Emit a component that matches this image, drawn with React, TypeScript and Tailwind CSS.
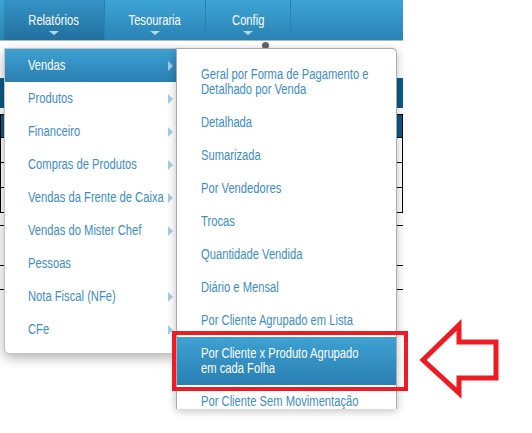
import { ReactNode } from "react";

const font = { fontFamily: '"Liberation Sans", Arial, sans-serif' };

const mainItems = [
  { label: "Vendas", arrow: true, active: true },
  { label: "Produtos", arrow: true },
  { label: "Financeiro", arrow: true },
  { label: "Compras de Produtos", arrow: true },
  { label: "Vendas da Frente de Caixa", arrow: true },
  { label: "Vendas do Mister Chef", arrow: true },
  { label: "Pessoas", arrow: false },
  { label: "Nota Fiscal (NFe)", arrow: true },
  { label: "CFe", arrow: true },
];

const subItems: { lines: string[]; active?: boolean }[] = [
  { lines: ["Geral por Forma de Pagamento e", "Detalhado por Venda"] },
  { lines: ["Detalhada"] },
  { lines: ["Sumarizada"] },
  { lines: ["Por Vendedores"] },
  { lines: ["Trocas"] },
  { lines: ["Quantidade Vendida"] },
  { lines: ["Diário e Mensal"] },
  { lines: ["Por Cliente Agrupado em Lista"] },
  { lines: ["Por Cliente x Produto Agrupado", "em cada Folha"], active: true },
  { lines: ["Por Cliente Sem Movimentação"] },
];

// narrow look of the original condensed face
function Narrow({ children, center }: { children: ReactNode; center?: boolean }) {
  return (
    <span className={`block whitespace-nowrap scale-x-[0.8] ${center ? "origin-center" : "origin-left"}`}>
      {children}
    </span>
  );
}

function Caret() {
  return <span className="block w-0 h-0 border-l-[5px] border-r-[5px] border-t-[4px] border-l-transparent border-r-transparent border-t-[#b3dcf3] mx-auto" />;
}

function NavItem({ label, active, width }: { label: string; active?: boolean; width: string }) {
  return (
    <div
      className={`${width} h-full flex flex-col items-center border-r border-[#2c7fae] ${
        active ? "bg-gradient-to-b from-[#3593c6] to-[#21709f]" : ""
      }`}
    >
      <span className="text-white text-[14px] leading-[16px] pt-[12px]">
        <Narrow center>{label}</Narrow>
      </span>
      <span className="pt-[3px]"><Caret /></span>
    </div>
  );
}

function SideArrow() {
  return <span className="w-0 h-0 border-t-[5px] border-b-[5px] border-l-[5px] border-t-transparent border-b-transparent border-l-[#a3cde8]" />;
}

export default function App() {
  return (
    <div className="relative w-[532px] h-[433px] overflow-hidden bg-white" style={font}>
      {/* top bar */}
      <div className="w-[403px] h-[40px] flex bg-gradient-to-b from-[#3ea3d5] to-[#2a83b5] pl-[4px]">
        <NavItem label="Relatórios" active width="w-[101px]" />
        <NavItem label="Tesouraria" width="w-[101px]" />
        <NavItem label="Config" width="w-[85px]" />
      </div>

      {/* page behind the menus */}
      <div className="w-[403px] border-t border-[#b5b5b5]">
        <div className="h-[37px]" />
        <div className="h-[30px] bg-[#0b5b8a]" />
        <div className="h-[6px]" />
        <div className="h-[24px] bg-[#0b5b8a] border border-black" />
        <div className="h-[25px] border-x border-b border-black" />
        <div className="h-[25px] border-x border-b border-black" />
        <div className="h-[25px] border-x border-b border-black" />
        <div className="h-[12px]" />
        <div className="h-[40px] border-t border-black" />
        <div className="h-[24px] border-t border-black" />
        <div className="h-[24px] border-t border-black" />
      </div>
      <span className="absolute left-[262px] top-[42px] w-[7px] h-[7px] rounded-full bg-[#666]" />

      {/* main dropdown */}
      <div className="absolute left-[4px] top-[48px] w-[173px] pb-[7px] bg-white border border-[#c4c4c4] rounded-b-[5px] shadow-[0_4px_12px_rgba(0,0,0,0.3)]">
        {mainItems.map((it) => (
          <div
            key={it.label}
            className={`h-[33px] flex items-center justify-between pl-[23px] pr-[3px] text-[14px] ${
              it.active ? "bg-gradient-to-b from-[#3fa1d3] to-[#2a7fb1] text-white" : "text-[#3d8dc5]"
            }`}
          >
            <span className="flex-1 min-w-0"><Narrow>{it.label}</Narrow></span>
            {it.arrow && <SideArrow />}
          </div>
        ))}
      </div>

      {/* submenu */}
      <div className="absolute left-[176px] top-[48px] w-[221px] h-[361px] overflow-hidden pt-[9px] bg-white border-x border-t border-[#aaaaaa] rounded-tr-[5px] shadow-[0_2px_10px_rgba(0,0,0,0.25)]">
        {subItems.map((it, i) => (
          <div
            key={i}
            className={`py-[9px] pl-[24px] text-[14px] leading-[15px] ${
              it.active ? "bg-gradient-to-b from-[#3fa1d3] to-[#2a7fb1] text-white" : "text-[#3d8dc5]"
            }`}
          >
            {it.lines.map((l) => (
              <Narrow key={l}>{l}</Narrow>
            ))}
          </div>
        ))}
      </div>

      {/* annotation */}
      <div className="absolute left-[172px] top-[331px] w-[236px] h-[60px] border-[4px] border-[#ed1c24]" />
      <svg className="absolute left-[415px] top-[318px]" width="90" height="82" viewBox="415 318 90 82">
        <polygon
          points="423,360 459,325 459,342 496,342 496,378 459,378 459,393"
          fill="none"
          stroke="#ed1c24"
          strokeWidth="5"
          strokeLinejoin="miter"
        />
      </svg>
    </div>
  );
}
